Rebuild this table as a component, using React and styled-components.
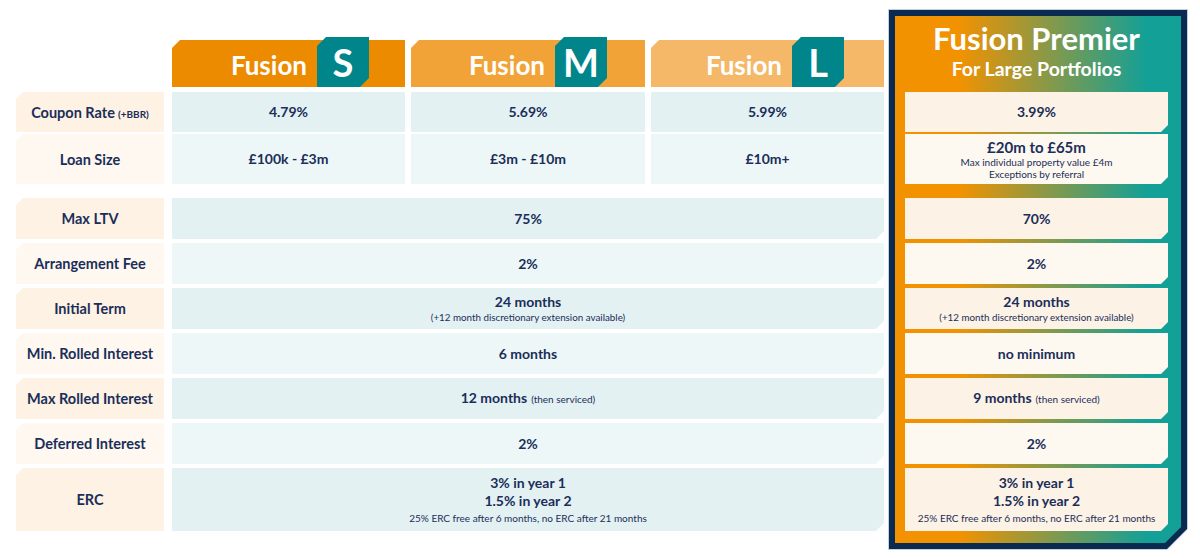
import React from 'react';
import styled, { createGlobalStyle } from 'styled-components';

const Global = createGlobalStyle`
  html, body { margin: 0; padding: 0; background: #ffffff; }
  body { font-family: Lato, "Noto Sans", sans-serif; color: #1b2e5a; }
`;

const NAVY = '#1b2e5a';

const Page = styled.div`
  width: 1200px;
  height: 558px;
  box-sizing: border-box;
  display: flex;
  align-items: flex-start;
  gap: 4px;
  padding: 9px 0 0 16px;
  overflow: hidden;
`;

const Table = styled.div`
  display: flex;
  flex-direction: column;
  padding-top: 28px;
  width: 868px;
`;

const Row = styled.div`
  display: grid;
  grid-template-columns: 150px 233px 234px 233px;
  column-gap: 6px;
  height: ${p => p.$h}px;
  margin-top: ${p => p.$mt || 0}px;
`;

const Label = styled.div`
  width: 148px;
  display: flex;
  align-items: center;
  justify-content: center;
  text-align: center;
  font-size: 14.5px;
  font-weight: 700;
  color: ${NAVY};
  background: ${p => (p.$dark ? '#fdf2e3' : '#fef8f0')};
  clip-path: polygon(7px 0, 100% 0, 100% 100%, 0 100%, 0 7px);
`;

const Small = styled.span`
  font-size: ${p => p.$size || 10}px;
  font-weight: ${p => p.$weight || 400};
  margin-left: ${p => p.$ml || 0}px;
`;

const Cell = styled.div`
  grid-column: ${p => (p.$span ? '2 / 5' : 'auto')};
  display: flex;
  flex-direction: column;
  align-items: center;
  justify-content: center;
  text-align: center;
  font-size: 14px;
  font-weight: 700;
  color: ${NAVY};
  background: ${p => (p.$dark ? '#e3f1f2' : '#eef7f7')};
  clip-path: ${p =>
    p.$span
      ? 'polygon(0 0, 100% 0, 100% calc(100% - 8px), calc(100% - 8px) 100%, 0 100%)'
      : 'none'};
`;

const Line = styled.div`
  font-size: ${p => p.$size || 14}px;
  font-weight: ${p => p.$weight || 700};
  line-height: ${p => p.$lh || 18}px;
`;

const HeaderCell = styled.div`
  position: relative;
  grid-column: ${p => p.$col};
  display: flex;
  justify-content: flex-end;
  align-items: flex-start;
  gap: 10px;
  padding-right: ${p => p.$pr}px;

  &::before {
    content: '';
    position: absolute;
    left: 0;
    right: 0;
    top: 3px;
    bottom: 0;
    background: ${p => p.$bg};
    clip-path: polygon(8px 0, 100% 0, 100% 100%, 0 100%, 0 8px);
  }
`;

const FusionWord = styled.span`
  position: relative;
  font-size: 26px;
  line-height: 26px;
  font-weight: 700;
  color: #ffffff;
  padding-top: 15px;
`;

const Badge = styled.div`
  position: relative;
  width: 52px;
  height: 50px;
  background: #00868a;
  color: #ffffff;
  font-size: 38px;
  line-height: 50px;
  font-weight: 700;
  text-align: center;
  clip-path: polygon(9px 0, 100% 0, 100% calc(100% - 9px), calc(100% - 9px) 100%, 0 100%, 0 9px);
`;

const PremierOutline = styled.div`
  width: 300px;
  height: 541px;
  box-sizing: border-box;
  padding: 1px;
  background: #c3d1de;
  clip-path: polygon(0 0, 100% 0, 100% calc(100% - 21px), calc(100% - 21px) 100%, 0 100%);
`;

const PremierFrame = styled.div`
  height: 100%;
  box-sizing: border-box;
  padding: 6px;
  background: #0b2a52;
  clip-path: polygon(0 0, 100% 0, 100% calc(100% - 20px), calc(100% - 20px) 100%, 0 100%);
`;

const PremierInner = styled.div`
  height: 100%;
  box-sizing: border-box;
  padding: 0 13px 0 10px;
  display: flex;
  flex-direction: column;
  background: linear-gradient(90deg, #f39200 0%, #f39200 22%, #13a097 88%, #13a097 100%);
  clip-path: polygon(0 0, 100% 0, 100% calc(100% - 16px), calc(100% - 16px) 100%, 0 100%);
`;

const PremierHead = styled.div`
  height: 76px;
  box-sizing: border-box;
  padding-top: 6px;
  display: flex;
  flex-direction: column;
  align-items: center;
  color: #ffffff;
`;

const PremierTitle = styled.div`
  font-size: 31px;
  line-height: 32px;
  font-weight: 700;
`;

const PremierSub = styled.div`
  font-size: 19.5px;
  line-height: 22px;
  font-weight: 700;
  margin-top: 4px;
`;

const PCell = styled.div`
  height: ${p => p.$h}px;
  margin-top: ${p => p.$mt || 0}px;
  flex-shrink: 0;
  display: flex;
  flex-direction: column;
  align-items: center;
  justify-content: center;
  text-align: center;
  font-size: 14px;
  font-weight: 700;
  color: ${NAVY};
  background: ${p => (p.$dark ? '#fcf2e5' : '#fdf8f0')};
  clip-path: polygon(0 0, 100% 0, 100% calc(100% - 7px), calc(100% - 7px) 100%, 0 100%);
`;

const extension = (
  <Line $size={9.8} $weight={400} $lh={13}>(+12 month discretionary extension available)</Line>
);

const erc = (
  <>
    <Line>3% in year 1</Line>
    <Line>1.5% in year 2</Line>
    <Line $size={10} $weight={400} $lh={16}>25% ERC free after 6 months, no ERC after 21 months</Line>
  </>
);

const rows = [
  { label: 'Max LTV', val: <Line>75%</Line>, pval: <Line>70%</Line>, h: 41, mt: 14, dark: true },
  { label: 'Arrangement Fee', val: <Line>2%</Line>, pval: <Line>2%</Line>, h: 41, mt: 4 },
  {
    label: 'Initial Term',
    val: (
      <>
        <Line>24 months</Line>
        {extension}
      </>
    ),
    pval: (
      <>
        <Line>24 months</Line>
        {extension}
      </>
    ),
    h: 41,
    mt: 4,
    dark: true,
  },
  { label: 'Min. Rolled Interest', val: <Line>6 months</Line>, pval: <Line>no minimum</Line>, h: 41, mt: 4 },
  {
    label: 'Max Rolled Interest',
    val: (
      <Line>
        12 months<Small $ml={4}>(then serviced)</Small>
      </Line>
    ),
    pval: (
      <Line>
        9 months<Small $ml={4}>(then serviced)</Small>
      </Line>
    ),
    h: 41,
    mt: 4,
    dark: true,
  },
  { label: 'Deferred Interest', val: <Line>2%</Line>, pval: <Line>2%</Line>, h: 41, mt: 4 },
  { label: 'ERC', val: erc, pval: erc, h: 63, mt: 4, dark: true },
];

const tiers = [
  { letter: 'S', bg: '#ec8a00', col: 2, pr: 36 },
  { letter: 'M', bg: '#f2a337', col: 3, pr: 38 },
  { letter: 'L', bg: '#f4b868', col: 4, pr: 40 },
];

export default function App() {
  return (
    <>
      <Global />
      <Page>
        <Table>
          <Row $h={50}>
            {tiers.map(t => (
              <HeaderCell key={t.letter} $col={t.col} $bg={t.bg} $pr={t.pr}>
                <FusionWord>Fusion</FusionWord>
                <Badge>{t.letter}</Badge>
              </HeaderCell>
            ))}
          </Row>
          <Row $h={40} $mt={5}>
            <Label $dark>
              <span>
                Coupon Rate<Small $size={10} $weight={700} $ml={3}>(+BBR)</Small>
              </span>
            </Label>
            <Cell $dark><Line>4.79%</Line></Cell>
            <Cell $dark><Line>5.69%</Line></Cell>
            <Cell $dark><Line>5.99%</Line></Cell>
          </Row>
          <Row $h={50} $mt={2}>
            <Label>Loan Size</Label>
            <Cell><Line>£100k - £3m</Line></Cell>
            <Cell><Line>£3m - £10m</Line></Cell>
            <Cell><Line>£10m+</Line></Cell>
          </Row>
          {rows.map(r => (
            <Row key={r.label} $h={r.h} $mt={r.mt}>
              <Label $dark={r.dark}>{r.label}</Label>
              <Cell $span $dark={r.dark}>{r.val}</Cell>
            </Row>
          ))}
        </Table>
        <PremierOutline>
          <PremierFrame>
            <PremierInner>
              <PremierHead>
                <PremierTitle>Fusion Premier</PremierTitle>
                <PremierSub>For Large Portfolios</PremierSub>
              </PremierHead>
              <PCell $h={40} $dark><Line>3.99%</Line></PCell>
              <PCell $h={50} $mt={2}>
                <Line $size={15}>£20m to £65m</Line>
                <Line $size={10} $weight={400} $lh={12}>Max individual property value £4m</Line>
                <Line $size={10} $weight={400} $lh={12}>Exceptions by referral</Line>
              </PCell>
              {rows.map(r => (
                <PCell key={r.label} $h={r.h} $mt={r.mt} $dark={r.dark}>{r.pval}</PCell>
              ))}
            </PremierInner>
          </PremierFrame>
        </PremierOutline>
      </Page>
    </>
  );
}
